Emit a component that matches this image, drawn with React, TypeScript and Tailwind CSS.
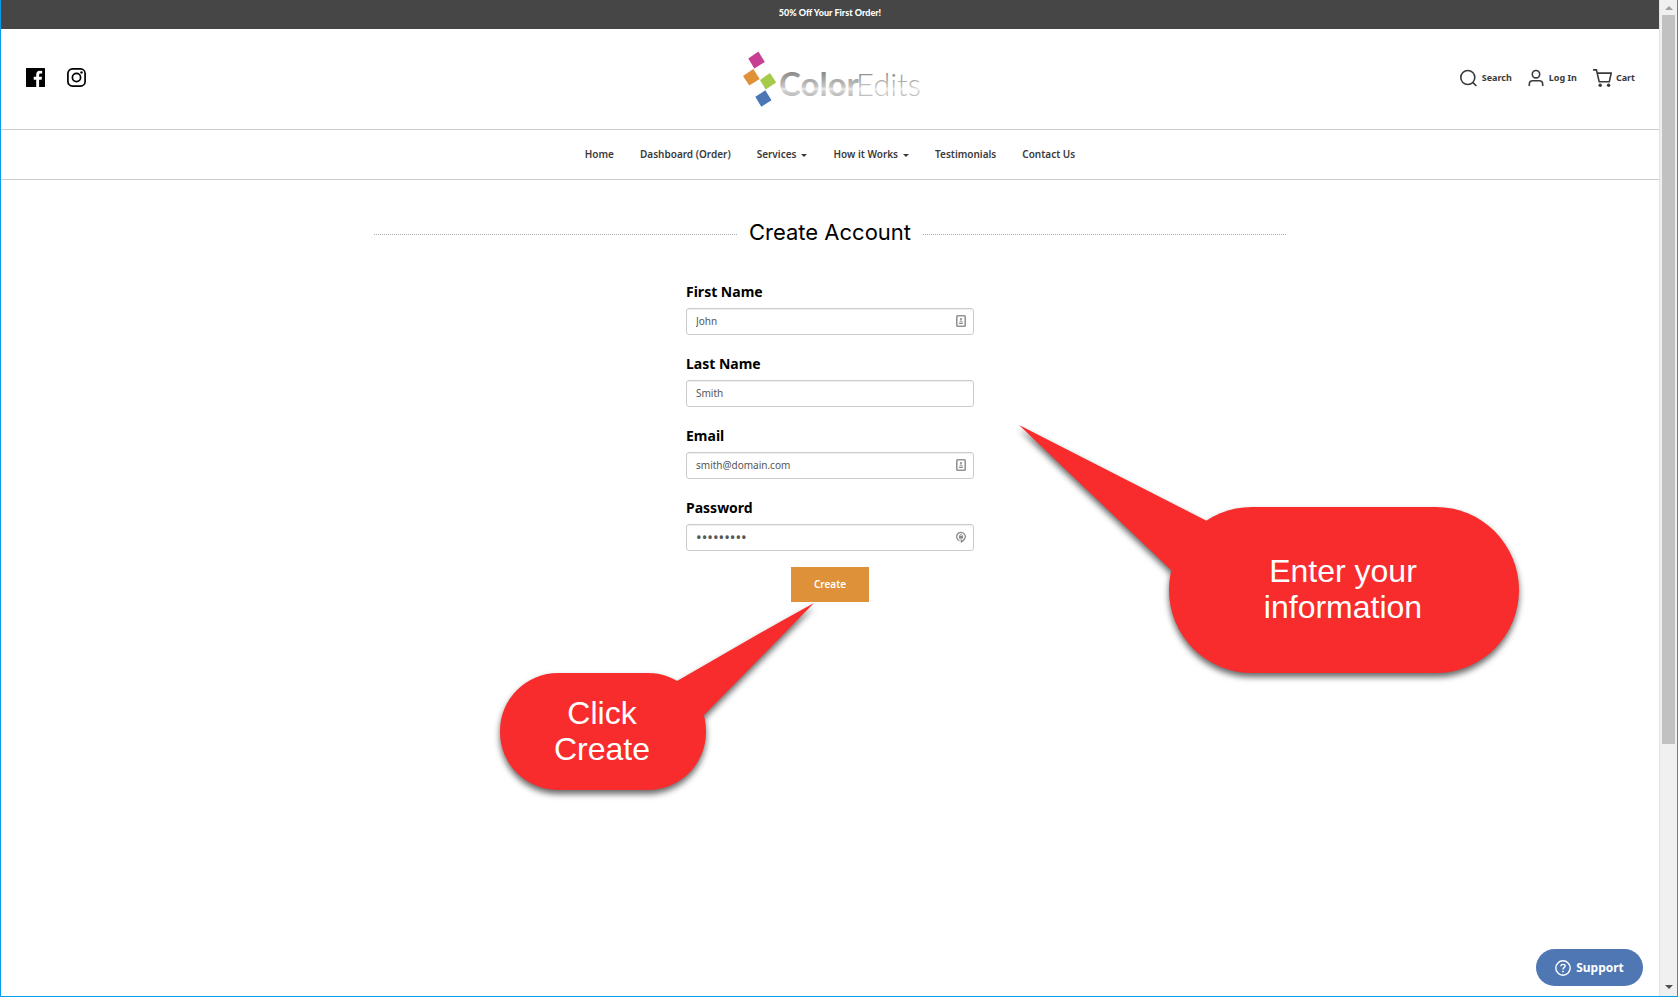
import { useState } from 'react';
import type { ReactNode } from 'react';

const navItems = [
  { label: 'Home' },
  { label: 'Dashboard (Order)' },
  { label: 'Services', menu: true },
  { label: 'How it Works', menu: true },
  { label: 'Testimonials' },
  { label: 'Contact Us' },
];

function FacebookIcon() {
  return (
    <svg className="size-[19px]" viewBox="0 0 19 19" aria-hidden="true">
      <path
        fillRule="evenodd"
        d="M0.6 0H18.4Q19 0 19 .6V18.4Q19 19 18.4 19H13.1V11.7H15.6L16 8.8H13.1V7Q13.1 5.6 14.6 5.6H16.2V3Q15.2 2.8 14 2.8Q10.2 2.8 10.2 6.6V8.8H7.7V11.7H10.2V19H.6Q0 19 0 18.4V.6Q0 0 .6 0Z"
      />
    </svg>
  );
}

function InstagramIcon() {
  return (
    <svg className="size-[19px]" viewBox="0 0 19 19" fill="none" stroke="#000" aria-hidden="true">
      <rect x="0.9" y="0.9" width="17.2" height="17.2" rx="4.6" strokeWidth="1.7" />
      <circle cx="9.5" cy="9.5" r="4.1" strokeWidth="1.7" />
      <circle cx="14.5" cy="4.5" r="1.2" fill="#000" stroke="none" />
    </svg>
  );
}

function SearchIcon() {
  return (
    <svg className="h-[18px] w-[17px]" viewBox="0 0 17 18" fill="none" stroke="#3a3a3a" strokeWidth="1.6" aria-hidden="true">
      <circle cx="7.8" cy="8.5" r="7" />
      <path d="M12.7 13.4L16.4 17" />
    </svg>
  );
}

function UserIcon() {
  return (
    <svg className="h-[18px] w-4" viewBox="0 0 16 18" fill="none" stroke="#3a3a3a" strokeWidth="1.6" aria-hidden="true">
      <circle cx="8" cy="5.2" r="3.7" />
      <path d="M1.3 17V15.2Q1.3 11.7 4.8 11.7H11.2Q14.7 11.7 14.7 15.2V17" />
    </svg>
  );
}

function CartIcon() {
  return (
    <svg className="h-[18px] w-[19px]" viewBox="0 0 19 18" fill="none" stroke="#3a3a3a" strokeWidth="1.6" aria-hidden="true">
      <path d="M0 .9H3.4L6.2 12.8H16.3L18.2 4.1H4.2" />
      <circle cx="7.2" cy="16.3" r="1.7" fill="#3a3a3a" stroke="none" />
      <circle cx="15.6" cy="16.3" r="1.7" fill="#3a3a3a" stroke="none" />
    </svg>
  );
}

function Logo() {
  return (
    <svg className="h-[58px] w-[182px]" viewBox="-3 0 182 58" role="img" aria-label="ColorEdits">
      <defs>
        <linearGradient id="chrome" gradientUnits="userSpaceOnUse" x1="0" y1="21" x2="0" y2="47">
          <stop offset="0" stopColor="#858585" />
          <stop offset="0.6" stopColor="#c4c4c4" />
          <stop offset="0.7" stopColor="#ececec" />
          <stop offset="0.76" stopColor="#d0d0d0" />
          <stop offset="1" stopColor="#b8b8b8" />
        </linearGradient>
      </defs>
      <path fill="#c73f93" d="M6.3 8.6L16.4 1.6L22.8 12L12.3 18.4Z" />
      <path fill="#e09137" d="M1 26L11.3 19L17.7 29L7.3 35.4Z" />
      <path fill="#a5cb4b" d="M18 30L28 23L34.2 32.4L23.7 39.6Z" />
      <path fill="#4c77b6" d="M13.3 46.8L23.3 40.3L29.5 50.3L19.3 56.8Z" />
      <text x="37" y="46" fill="url(#chrome)" fontFamily="Lato, sans-serif" fontSize="33" fontWeight="700">
        Color
      </text>
      <text x="114" y="46" fill="url(#chrome)" fontFamily="Lato, sans-serif" fontSize="31" fontWeight="300">
        Edits
      </text>
    </svg>
  );
}

function CardIcon() {
  return (
    <svg className="h-3 w-[10px]" viewBox="0 0 10 12" fill="none" aria-hidden="true">
      <rect x="0.8" y="0.8" width="8.4" height="10.4" rx="0.8" stroke="#949494" strokeWidth="1.6" />
      <circle cx="5" cy="4" r="1.1" fill="#8a8a8a" />
      <path d="M3.1 6.7Q5 4.2 6.9 6.7ZM3 7.7H7V8.9H3Z" fill="#8a8a8a" />
    </svg>
  );
}

function LockIcon() {
  return (
    <svg className="h-3 w-[10px]" viewBox="0 0 10 12" fill="none" aria-hidden="true">
      <path d="M3.4 9.7A4.3 4.3 0 1 1 7 9.5" stroke="#8a8a8a" strokeWidth="1.3" />
      <path d="M4.6 8L8 10.1L4.8 12Z" fill="#8a8a8a" />
      <path d="M3 4.8H7V7.6H3Z" fill="#8a8a8a" />
      <path d="M3.8 5V3.9Q5 2.2 6.2 3.9V5" stroke="#8a8a8a" strokeWidth="0.8" />
    </svg>
  );
}

type FieldProps = {
  id: string;
  label: string;
  type?: string;
  initial: string;
  icon?: ReactNode;
};

function Field({ id, label, type = 'text', initial, icon }: FieldProps) {
  const [value, setValue] = useState(initial);

  return (
    <div className="flex flex-col gap-1.5">
      <label htmlFor={id} className="text-sm leading-5 font-bold text-black">
        {label}
      </label>
      <div className="flex h-[27px] items-center rounded-[3px] border border-[#ccc] bg-white pr-[7px] pb-0.5 shadow-[inset_0_1px_1px_rgba(0,0,0,0.07)]">
        <input
          id={id}
          type={type}
          value={value}
          onChange={(e) => setValue(e.target.value)}
          className={`min-w-0 flex-1 bg-transparent px-[9px] leading-4 text-[#555] outline-none ${
            type === 'password' ? 'text-[15px]' : 'text-[10px]'
          }`}
        />
        {icon}
      </div>
    </div>
  );
}

export default function App() {
  return (
    <div className="flex min-h-screen border-r border-b border-l border-[#0a9bec] bg-white font-['Noto_Sans',sans-serif] text-[#3a3a3a]">
      <div className="relative flex min-w-0 flex-1 flex-col">
        <div className="flex h-[29px] items-center justify-center bg-[#464646] pb-[3px] font-['Lato',sans-serif] text-[9px] leading-3 font-black text-white">
          50% Off Your First Order!
        </div>

        <header className="grid h-[101px] grid-cols-3 items-center border-b border-[#ccc] px-6 pb-1">
          <div className="flex gap-[22px] pl-px">
            <a href="#facebook" aria-label="Facebook"><FacebookIcon /></a>
            <a href="#instagram" aria-label="Instagram"><InstagramIcon /></a>
          </div>
          <a href="#home" className="justify-self-center pt-1"><Logo /></a>
          <div className="flex items-center gap-4 justify-self-end pt-0.5 text-[9px] leading-3 font-bold">
            <a href="#search" className="flex items-center gap-[5px]"><SearchIcon />Search</a>
            <a href="#login" className="flex items-center gap-[5px]"><UserIcon />Log In</a>
            <a href="#cart" className="flex items-center gap-1"><CartIcon />Cart</a>
          </div>
        </header>

        <nav className="flex h-[50px] items-center justify-center gap-[26px] border-b border-[#ccc] pb-px text-[10px] leading-4 font-semibold">
          {navItems.map((item) => (
            <a key={item.label} href="#nav" className="flex items-center gap-[5px]">
              {item.label}
              {item.menu && (
                <span className="mt-0.5 border-x-3 border-t-3 border-x-transparent border-t-[#3a3a3a]" />
              )}
            </a>
          ))}
        </nav>

        <main className="flex flex-col items-center px-6 pt-9">
          <div className="flex w-full max-w-[912px] items-center gap-3">
            <div className="mt-1 flex-1 border-t border-dotted border-[#aaa]" />
            <h1 className="font-['Inter',sans-serif] text-[22px] leading-8 font-normal text-black">Create Account</h1>
            <div className="mt-1 flex-1 border-t border-dotted border-[#aaa]" />
          </div>

          <form className="mt-[34px] flex w-full max-w-[288px] flex-col gap-[19px]" onSubmit={(e) => e.preventDefault()}>
            <Field id="first-name" label="First Name" initial="John" icon={<CardIcon />} />
            <Field id="last-name" label="Last Name" initial="Smith" />
            <Field id="email" label="Email" initial="smith@domain.com" icon={<CardIcon />} />
            <Field id="password" label="Password" type="password" initial="coloredit" icon={<LockIcon />} />
            <button
              type="submit"
              className="-mt-[3px] h-[35px] w-[78px] self-center bg-[#df9139] pb-px text-[10px] leading-4 font-semibold text-white"
            >
              Create
            </button>
          </form>
        </main>

        {/* Callouts */}
        <div className="absolute top-[603px] left-1/2 -ml-[330px] h-[187px] w-[314px]">
          <svg
            className="absolute inset-0 overflow-visible drop-shadow-[0_4px_3px_rgba(0,0,0,0.6)]"
            width="314"
            height="187"
            viewBox="0 0 314 187"
            fill="#f82c2d"
            aria-hidden="true"
          >
            <rect y="70" width="206" height="117" rx="58" />
            <path d="M177 78L255 33Q285 16 314 0L204 112L170 120Z" />
          </svg>
          <p className="relative w-[204px] pt-[92px] text-center font-['Liberation_Sans',sans-serif] text-[32px] leading-9 text-white">
            Click
            <br />
            Create
          </p>
        </div>

        <div className="absolute top-[425px] left-1/2 ml-[190px] h-[248px] w-[499px]">
          <svg
            className="absolute inset-0 overflow-visible drop-shadow-[0_4px_3px_rgba(0,0,0,0.6)]"
            width="499"
            height="248"
            viewBox="0 0 499 248"
            fill="#f82c2d"
            aria-hidden="true"
          >
            <rect x="149" y="82" width="350" height="166" rx="83" />
            <path d="M-1 0L187 96L206 130L166 160L151 145Z" />
          </svg>
          <p className="relative ml-[149px] w-[348px] pt-[128px] text-center font-['Liberation_Sans',sans-serif] text-[32px] leading-9 text-white">
            Enter your
            <br />
            information
          </p>
        </div>

        <button
          type="button"
          className="absolute right-4 bottom-2.5 flex h-[37px] w-[107px] items-center justify-center gap-[5px] rounded-full bg-[#4e77b4] text-[12px] leading-4 font-bold text-white"
        >
          <svg className="size-4" viewBox="0 0 16 16" fill="none" stroke="#fff" aria-hidden="true">
            <circle cx="8" cy="8" r="7.2" strokeWidth="1.4" />
            <path d="M5.9 6.3Q5.9 4.4 8 4.4Q10.1 4.4 10.1 6.1Q10.1 7 9 7.7Q8 8.3 8 9.5" strokeWidth="1.4" />
            <path d="M7.2 10.7H8.8V12.3H7.2Z" fill="#fff" stroke="none" />
          </svg>
          Support
        </button>
      </div>

      {/* Scrollbar */}
      <div className="flex w-[18px] flex-col items-center border-l border-[#e2e2e2] bg-[#f0f0f0]">
        <div className="flex h-[15px] items-center justify-center">
          <span className="border-x-4 border-b-4 border-x-transparent border-b-[#a0a0a0]" />
        </div>
        <div className="flex w-[13px] flex-1 flex-col">
          <div className="h-[75.7%] bg-[#c1c1c1]" />
        </div>
        <div className="flex h-[18px] items-center justify-center">
          <span className="border-x-4 border-t-4 border-x-transparent border-t-[#505050]" />
        </div>
      </div>
    </div>
  );
}
